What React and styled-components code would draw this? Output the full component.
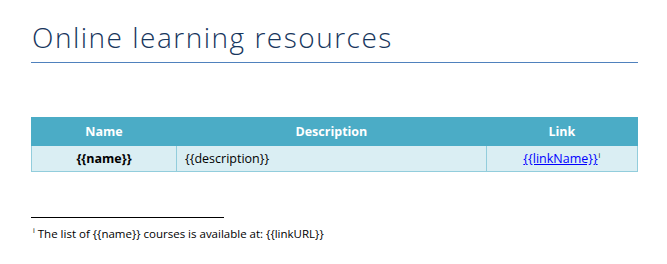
import React from "react";
import styled, { createGlobalStyle } from "styled-components";

const Global = createGlobalStyle`
  html, body { margin: 0; padding: 0; background: #fff; }
  body { font-family: "Open Sans", "Lato", sans-serif; }
`;

const Page = styled.div`
  width: 667px;
  height: 264px;
  box-sizing: border-box;
  padding: 19px 29px 0 31px;
  overflow: hidden;
`;

const Title = styled.h1`
  margin: 0;
  padding: 0 0 0 1px;
  font-family: "Open Sans", sans-serif;
  font-weight: 300;
  font-size: 28px;
  letter-spacing: 1.5px;
  line-height: 36px;
  color: #17365d;
  border-bottom: 1px solid #4f81bd;
  height: 44px;
  box-sizing: border-box;
`;

const Table = styled.table`
  margin-top: 54px;
  width: 607px;
  border-collapse: collapse;
  font-family: "Open Sans", sans-serif;
  font-size: 12.5px;
`;

const Th = styled.th`
  background: #4bacc6;
  color: #fff;
  font-weight: 700;
  height: 27px;
  padding: 0;
  text-align: center;
  border: 1px solid #4bacc6;
  width: ${(p) => p.$w};
`;

const Td = styled.td`
  background: #daeef3;
  color: #000;
  height: 25px;
  padding: 0 ${(p) => (p.$align === "left" ? "8px" : "0")};
  text-align: ${(p) => p.$align || "center"};
  font-weight: ${(p) => (p.$bold ? 700 : 400)};
  border: 1px solid #92cddc;
`;

const Link = styled.a`
  color: #0000ff;
  text-decoration: underline;
`;

const Sup = styled.sup`
  font-size: 7px;
  vertical-align: 5px;
  line-height: 0;
  margin-left: 1px;
`;

const Footnotes = styled.div`
  margin-top: 45px;
  font-family: "Open Sans", sans-serif;
  font-size: 11.5px;
  color: #000;
`;

const Separator = styled.div`
  width: 193px;
  height: 1px;
  background: #000;
  margin-bottom: 8px;
`;

const Note = styled.p`
  margin: 0 0 0 1px;
  line-height: 15px;
`;

export default function App() {
  return (
    <>
      <Global />
      <Page>
        <Title>Online learning resources</Title>
        <Table>
          <thead>
            <tr>
              <Th $w="145px">Name</Th>
              <Th $w="311px">Description</Th>
              <Th $w="151px">Link</Th>
            </tr>
          </thead>
          <tbody>
            <tr>
              <Td $bold>{"{{name}}"}</Td>
              <Td $align="left">{"{{description}}"}</Td>
              <Td>
                <Link href="#">{"{{linkName}}"}</Link>
                <Sup>i</Sup>
              </Td>
            </tr>
          </tbody>
        </Table>
        <Footnotes>
          <Separator />
          <Note>
            <Sup>i</Sup> The list of {"{{name}}"} courses is available at: {"{{linkURL}}"}
          </Note>
        </Footnotes>
      </Page>
    </>
  );
}
